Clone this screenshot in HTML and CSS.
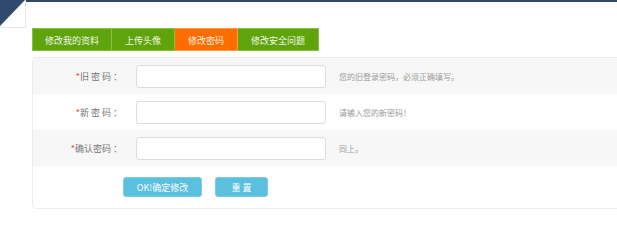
FILE: index.html
```html
<!DOCTYPE html>
<html lang="zh">
<head>
<meta charset="utf-8">
<link rel="stylesheet" href="styles.css">
</head>
<body>
<div class="topbar"></div>
<svg class="corner" width="28" height="30" viewBox="0 0 28 30">
  <rect x="0" y="0" width="25.5" height="27.5" fill="#fff" stroke="#e6e6e6" stroke-width="1"/>
  <polygon points="0,0 25,0 0,26" fill="#2f4a6d"/>
</svg>
<div class="page">
  <ul class="tabs">
    <li class="tab w1">修改我的资料</li>
    <li class="tab w2">上传头像</li>
    <li class="tab w2 active">修改密码</li>
    <li class="tab w3">修改安全问题</li>
  </ul>
  <div class="panel">
    <div class="row grey">
      <label class="lbl"><span class="req">*</span>旧 密 码 ：</label>
      <input class="field" type="password">
      <span class="hint">您的旧登录密码，必须正确填写。</span>
    </div>
    <div class="row">
      <label class="lbl"><span class="req">*</span>新 密 码 ：</label>
      <input class="field" type="password">
      <span class="hint">请输入您的新密码！</span>
    </div>
    <div class="row grey">
      <label class="lbl"><span class="req">*</span>确认密码 ：</label>
      <input class="field" type="password">
      <span class="hint">同上。</span>
    </div>
    <div class="actions">
      <button class="btn b1">OK!确定修改</button>
      <button class="btn b2">重 置</button>
    </div>
  </div>
</div>
</body>
</html>
```
FILE: styles.css
```css
* { box-sizing: border-box; }
html, body { margin: 0; padding: 0; background: #fff; overflow: hidden; }
body {
  font-family: "Noto Sans CJK SC", "Noto Sans", sans-serif;
  font-size: 9px;
  color: #666;
  width: 617px;
  height: 249px;
  position: relative;
}
.topbar { height: 2px; background: #2f4a6d; }
.corner { position: absolute; left: 0; top: 0; }
.page { padding: 26px 0 0 32px; }
.tabs {
  display: flex;
  list-style: none;
  margin: 0;
  padding: 0;
  height: 23px;
}
.tab {
  height: 23px;
  line-height: 23px;
  text-align: center;
  color: #f1f7e6;
  background: #5fa40c;
  border: 1px solid #86c045;
  border-left-width: 0;
  font-size: 9px;
}
.tab:first-child { border-left-width: 1px; }
.tab.w1 { width: 80px; }
.tab.w2 { width: 63px; }
.tab.w3 { width: 81px; }
.tab.active { background: #ff6c00; border-color: #ff9a4a; color: #fff3e6; }
.panel {
  margin-top: 6px;
  width: 585px;
  border: 1px solid #ebebeb;
  border-right: 0;
  border-radius: 5px 0 0 5px;
  overflow: hidden;
}
.row {
  display: flex;
  align-items: center;
  height: 36px;
  background: #fff;
}
.row.grey { background: #f7f7f7; }
.lbl {
  width: 90px;
  padding-right: 1px;
  text-align: right;
  color: #747474;
  font-size: 9px;
}
.req { color: #e8453c; }
.field {
  margin-left: 13px;
  width: 190px;
  height: 23px;
  border: 1px solid #dcdcdc;
  border-radius: 3px;
  background: #fff;
  padding: 0;
}
.hint {
  margin-left: 13px;
  color: #9a9a9a;
  font-size: 8px;
}
.actions {
  display: flex;
  align-items: center;
  gap: 13px;
  height: 42px;
  padding-left: 90px;
}
.btn {
  height: 20px;
  border: 1px solid #7ccbe5;
  border-radius: 3px;
  background: #5bc0de;
  color: #fff;
  font-family: "Noto Sans CJK SC", "Noto Sans", sans-serif;
  font-size: 9px;
  padding: 0;
}
.b1 { width: 79px; }
.b2 { width: 53px; }
```
